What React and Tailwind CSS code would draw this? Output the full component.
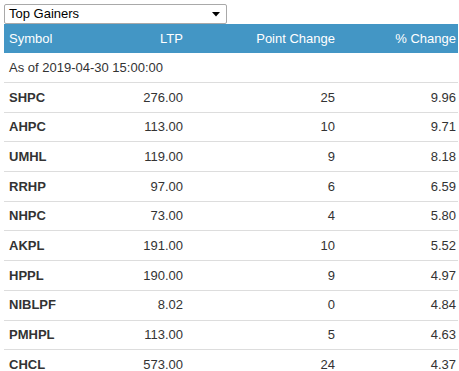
import React from "react";

const rows = [
  ["SHPC", "276.00", "25", "9.96"],
  ["AHPC", "113.00", "10", "9.71"],
  ["UMHL", "119.00", "9", "8.18"],
  ["RRHP", "97.00", "6", "6.59"],
  ["NHPC", "73.00", "4", "5.80"],
  ["AKPL", "191.00", "10", "5.52"],
  ["HPPL", "190.00", "9", "4.97"],
  ["NIBLPF", "8.02", "0", "4.84"],
  ["PMHPL", "113.00", "5", "4.63"],
  ["CHCL", "573.00", "24", "4.37"],
];

export default function App() {
  return (
    <div
      className="w-[459px] h-[371px] overflow-hidden bg-white text-[13px] text-[#333]"
      style={{ fontFamily: '"Liberation Sans", Arial, sans-serif' }}
    >
      <div className="pt-[4px] pl-[4px]">
        <div className="w-[223px] h-[20px] border border-[#a9a9a9] rounded-[2px] flex items-center justify-between pl-[4px] pr-[6px] text-black bg-white">
          <span>Top Gainers</span>
          <svg width="8" height="5" viewBox="0 0 8 5">
            <path d="M0 0 H8 L4 4.5 Z" fill="#000" />
          </svg>
        </div>
      </div>
      <div className="ml-[4px] w-[454px]">
        <div className="grid grid-cols-[100px_81px_152px_121px] h-[29px] items-center bg-[#4396c5] text-white">
          <div className="pl-[5px]">Symbol</div>
          <div className="text-right pr-[2px]">LTP</div>
          <div className="text-right pr-[2px]">Point Change</div>
          <div className="text-right pr-[2px]">% Change</div>
        </div>
        <div className="h-[29px] flex items-center pl-[5px]">As of 2019-04-30 15:00:00</div>
        {rows.map((r) => (
          <div
            key={r[0]}
            className="grid grid-cols-[100px_81px_152px_121px] h-[29.7px] items-center border-t border-[#dddddd]"
          >
            <div className="pl-[5px] font-bold">{r[0]}</div>
            <div className="text-right pr-[2px]">{r[1]}</div>
            <div className="text-right pr-[2px]">{r[2]}</div>
            <div className="text-right pr-[2px]">{r[3]}</div>
          </div>
        ))}
      </div>
    </div>
  );
}
